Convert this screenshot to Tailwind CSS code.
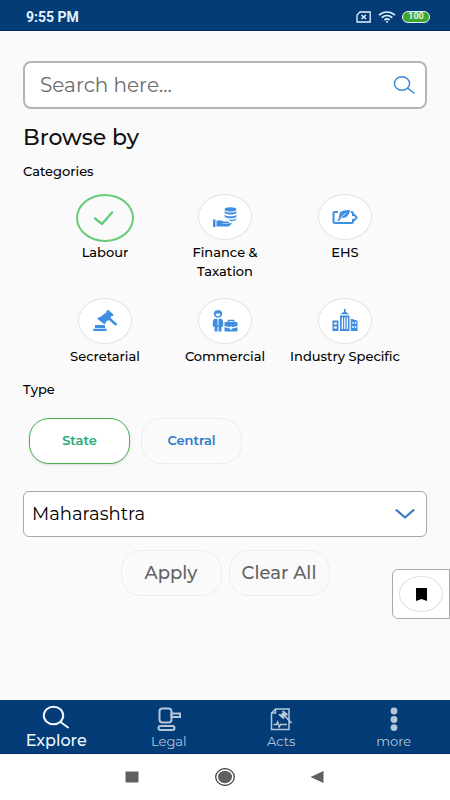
<!DOCTYPE html>
<html lang="en">
<head>
<meta charset="utf-8">
<meta name="viewport" content="width=device-width, initial-scale=1">
<title>Explore</title>
<script src="https://cdn.jsdelivr.net/npm/@tailwindcss/browser@4"></script>
</head>
<body class="flex min-h-screen flex-col bg-[#fafafa] font-['Montserrat','Inter',sans-serif] text-black">

<header class="flex h-[31px] items-center justify-between border-b border-[#002a5c] bg-[#043c78] pr-5 pl-[26px] pt-[3px] text-white">
  <span class="font-['Roboto',sans-serif] text-sm font-bold text-[#e2f3fb]">9:55 PM</span>
  <div class="flex items-center gap-1.5">
    <svg class="h-3 w-4" viewBox="0 0 16 12" fill="none" stroke="#e2f3fb" stroke-width="1.3"><path d="M4 1h10.2v10H1V4z"/><path d="M5.500 4l4.500 4M10 4L5.500 8" stroke-width="1.500"/></svg>
    <svg class="h-3 w-[18px]" viewBox="0 0 18 12" fill="none" stroke="#e2f3fb" stroke-width="1.700"><path d="M1 4.200c4.800-4.300 11.200-4.300 16 0M3.700 6.700c3.200-2.900 7.400-2.900 10.600 0M6.400 9c1.600-1.400 3.600-1.400 5.200 0"/><circle cx="9" cy="10.700" r="1" fill="#e2f3fb" stroke="none"/></svg>
    <span class="flex h-3 w-7 items-center justify-center rounded-full border border-[#e2f3fb] bg-[#43a62c] font-['Roboto',sans-serif] text-[9px] font-bold text-[#e2f3fb]">100</span>
  </div>
</header>

<main class="relative flex-1 px-[23px] pt-[30px]">
  <form class="flex h-12 items-center rounded-lg border-2 border-[#b5b5b5] bg-white pr-2.5 pl-[15px]">
    <input type="search" aria-label="Search" placeholder="Search here..." class="min-w-0 flex-1 bg-transparent text-xl leading-6 outline-none placeholder:text-[#6c6c6c]">
    <button type="button" aria-label="Submit search">
      <svg class="h-5 w-[22px]" viewBox="0 0 22 20" fill="none" stroke="#3d86d3" stroke-width="1.500" stroke-linecap="round"><ellipse cx="9" cy="8.500" rx="7.600" ry="6.800"/><path d="M14.800 13.300L21 18"/></svg>
    </button>
  </form>

  <h1 class="mt-[15px] text-[22px] leading-7 font-medium text-[#111]">Browse by</h1>
  <h2 class="mt-[9px] text-[13px] leading-5 font-medium">Categories</h2>

  <div class="mt-[13px] grid grid-cols-3 gap-y-[17px] px-[22px] text-center text-[13px] leading-[19px] font-medium">
    <button type="button" aria-pressed="true" class="flex flex-col items-center">
      <span class="mb-px flex h-12 w-[58px] items-center justify-center rounded-[50%] border-2 border-[#67cb78]">
        <svg class="h-4 w-6" viewBox="2 0 24 16" fill="none" stroke="#67cb78" stroke-width="2.400" stroke-linecap="round" stroke-linejoin="round"><path d="M4 8.500L11 14 21 2.500"/></svg>
      </span>
      <span>Labour</span>
    </button>
    <button type="button" class="flex flex-col items-center">
      <span class="mb-[3px] flex h-[46px] w-[54px] items-center justify-center rounded-[50%] border border-[#e3e3e3] bg-white">
        <svg class="h-5 w-6" viewBox="0 0 24 20" fill="#3f8ee2"><path d="M0 12.500h2.500V20H0zM3.500 13.500h5.300l1.700 1H15c1.500 0 1.500 2 0 2H9.500v.6H15l2-1.100c1.200-.5 2 .4 1.200 1.300L15.800 19.500H3.500z"/><ellipse cx="17.500" cy="2.400" rx="6" ry="2.200"/><path d="M11.500 4c2 2 10 2 12 0v1.700c-1 2.400-11 2.400-12 0zM11.500 7.700c2 2 10 2 12 0v1.700c-1 2.400-11 2.400-12 0zM11.500 11.300c2 2 10 2 12 0V12c-.8 1.600-3 2.200-5.500 2.200l-2.500-1.300c-2 0-3.600-.4-4-1.300z"/></svg>
      </span>
      <span class="w-20">Finance &amp; Taxation</span>
    </button>
    <button type="button" class="flex flex-col items-center">
      <span class="mb-[3px] flex h-[46px] w-[54px] items-center justify-center rounded-[50%] border border-[#e3e3e3] bg-white">
        <svg class="h-4 w-[26px]" viewBox="0 0 26 16" fill="none" stroke="#3f8ee2" stroke-width="2"><path d="M6 3H3Q1.500 3 1.500 4.500v8Q1.500 14 3 14h16.500q1.500 0 1.500-1.500V11h1.500l2-2.500-2-2.500H21V4.500Q21 3 19.500 3h-.8"/><path d="M18 .8C13 1.800 7.500.8 7.200 6.400L6.500 10.600l2-1.800c4.500 1 8.800-1.300 9.500-8z" fill="#3f8ee2" stroke="none"/><path d="M8 9.500l6-5.500" stroke="#fff" stroke-width=".8"/><path d="M5.800 12l2.700-3" stroke-width="1.500"/></svg>
      </span>
      <span>EHS</span>
    </button>
    <button type="button" class="flex flex-col items-center">
      <span class="mb-[3px] flex h-[46px] w-[54px] items-center justify-center rounded-[50%] border border-[#e3e3e3] bg-white">
        <svg class="h-[22px] w-6" viewBox="0 0 24 22" fill="#3f8ee2"><path d="M13.800.6l1.500-.5 5.200 4.300-.5 1.600-1.500.1-.9 1.900 6.200 5.600c.8 1-.5 2.400-1.800 1.700l-6.200-5.300-2.800 1.800-.3 1.700-1.600.4L4.500 9l.6-1.500 1.800-.2L13.200 2.400z"/><path d="M2 15h10v3H2z"/><path d="M.3 18.700h13.200v2.300H.3z"/></svg>
      </span>
      <span>Secretarial</span>
    </button>
    <button type="button" class="flex flex-col items-center">
      <span class="mb-[3px] flex h-[46px] w-[54px] items-center justify-center rounded-[50%] border border-[#e3e3e3] bg-white">
        <svg class="h-[22px] w-[26px]" viewBox="0 0 26 22" fill="#3f8ee2"><path fill-rule="evenodd" d="M6 .3c3.400 0 4.600 2 4 4.500C9.300 7 7.800 7.800 6 7.800S2.700 7 2 4.800C1.400 2.300 2.600.3 6 .3zM3.500 3.800C4 5.800 5 6.400 6 6.400s2-.6 2.500-2.600C6.800 4 5.500 3 5.500 3s-.9.900-2 .8z"/><path d="M4.300 8.500L6 10l1.700-1.500c3 .3 3.500 2 3.500 4.300v4H9.500V21.500h-3V17h-1v4.500h-3v-4.700H.8v-4c0-2.300.5-4 3.500-4.300z"/><path d="M6 10v5.500" stroke="#fff" stroke-width=".9"/><path d="M12.500 13q0-1 1-1h11q1 0 1 1v3l-5.500 1.300v-.8h-2v.8L12.500 16zM12.500 17.200l5.500 1.200v1h2v-1l5.500-1.200v3.300q0 1-1 1h-11q-1 0-1-1z"/><path d="M16.300 12v-1.500h5.400V12" fill="none" stroke="#3f8ee2" stroke-width="1.300"/></svg>
      </span>
      <span>Commercial</span>
    </button>
    <button type="button" class="flex flex-col items-center">
      <span class="mb-[3px] flex h-[46px] w-[54px] items-center justify-center rounded-[50%] border border-[#e3e3e3] bg-white">
        <svg class="mb-0.5 h-[22px] w-[26px]" viewBox="0 0 26 22" fill="#3f8ee2"><path d="M12 0h1.600v2.200c.5 1 1.900 1.700 3.700 3H8.300c1.900-1.300 3.200-2 3.700-3z"/><path fill-rule="evenodd" d="M8 6.500h9.500V22H8zM9.700 8.500V20h1.300V8.500zm2.500 0V20h1.200V8.500zm2.500 0V20h1.200V8.500zM.5 11.500h6V22h-6zM2 13.500v2h2.800v-2zm0 4v2h2.800v-2zM18.800 9.500l6.700 2.200V22h-6.700zm1.500 3.500v1.800h1.400V13zm2.600 0v1.800h1.300V13zm-2.600 4v2h1.400v-2zm2.600 0v2h1.300v-2z"/></svg>
      </span>
      <span class="whitespace-nowrap">Industry Specific</span>
    </button>
  </div>

  <h2 class="mt-[13px] text-[13px] leading-5 font-medium">Type</h2>
  <div class="mt-[19px] flex gap-[11px] px-1.5 text-[13px] font-semibold">
    <button type="button" aria-pressed="true" class="h-[46px] w-[101px] rounded-[20px] border border-[#4caf50] bg-white text-[#26a974] shadow-sm">State</button>
    <button type="button" class="h-[46px] w-[101px] rounded-[20px] border border-[#ececec] text-[#2f78c8]">Central</button>
  </div>

  <div class="relative mt-[27px]">
    <select aria-label="State" class="block h-[46px] w-full appearance-none rounded-md border border-[#a9a9a9] bg-white pr-10 pl-2 text-lg outline-none"><option>Maharashtra</option></select>
    <svg class="pointer-events-none absolute top-[18px] right-3 h-2.5 w-5" viewBox="0 0 20 10" fill="none" stroke="#3d7cc4" stroke-width="2.200" stroke-linecap="round" stroke-linejoin="round"><path d="M1.500 1.200L10 8.500l8.500-7.300"/></svg>
  </div>

  <div class="mt-[13px] mb-6 flex justify-center gap-[7px] text-lg font-medium text-[#636363]">
    <button type="button" class="h-[46px] w-[101px] rounded-[20px] border border-[#ececec]">Apply</button>
    <button type="button" class="h-[46px] w-[101px] rounded-[20px] border border-[#ececec]">Clear All</button>
  </div>

  <button type="button" aria-label="Bookmarks" class="absolute top-[538px] right-0 flex h-[50px] w-[58px] items-center justify-center rounded-l-md border border-[#a9a9a9] bg-white">
    <span class="flex h-9 w-11 items-center justify-center rounded-[50%] border border-[#e0e0e0]">
      <svg class="h-[13px] w-[11px]" viewBox="0 0 11 13"><path d="M0 0h11v13L5.500 11 0 13z"/></svg>
    </span>
  </button>
</main>

<nav class="grid h-[54px] grid-cols-4 border-b border-[#002a5c] bg-[#043c78] text-[13px] leading-[18px] text-[#b4c6da]">
  <a href="#explore" aria-current="page" class="flex flex-col items-center pt-[5px] text-base leading-[18px] font-medium text-[#eef7fd]">
    <svg class="mb-[3px] h-6 w-7" viewBox="0 0 28 24" fill="none" stroke="currentColor" stroke-width="2" stroke-linecap="round"><ellipse cx="11.500" cy="10.500" rx="9.700" ry="8.700"/><path d="M18.500 17l7.500 5.500"/></svg>
    Explore
  </a>
  <a href="#legal" class="flex flex-col items-center pt-[7px]">
    <svg class="mb-px h-6 w-6" viewBox="0 0 24 24" fill="none" stroke="currentColor" stroke-width="2"><rect x="2.500" y="1.500" width="12" height="14" rx="3"/><path d="M14.500 6.500H23v3.500h-8.500z"/><rect x="1.500" y="19" width="16" height="4" rx="2"/></svg>
    Legal
  </a>
  <a href="#acts" class="flex flex-col items-center pt-[7px]">
    <svg class="mb-px h-6 w-6" viewBox="0 0 24 24" fill="none" stroke="currentColor" stroke-width="1.500"><path d="M6.500 2H20v20.500H2.500V6zM6.500 2v4h-4M4.500 17.500h3l1.200-2.500 1.500 5 1.300-2.500H18"/><path d="M15 8l7.500 8" stroke-width="1.700"/><path d="M14.800 4.300l3.400 2.900-3.700 3.800-3.300-3z" fill="currentColor" stroke="none"/><path d="M13.500 4l5 4M10 7.300l5 4.200" stroke-width="1.700"/></svg>
    Acts
  </a>
  <a href="#more" class="flex flex-col items-center pt-[7px]">
    <svg class="mb-px h-6 w-2" viewBox="0 0 8 24" fill="currentColor"><circle cx="4" cy="4" r="3.400"/><circle cx="4" cy="12.500" r="3.400"/><circle cx="4" cy="20.600" r="3.400"/></svg>
    more
  </a>
</nav>

<footer class="flex h-[46px] items-center justify-center gap-[73px] bg-white">
  <button type="button" aria-label="Recent apps"><svg class="h-5 w-5" viewBox="0 0 20 20"><path d="M3.500 4.500h13v11h-13z" fill="#606060"/></svg></button>
  <button type="button" aria-label="Home"><svg class="h-5 w-5" viewBox="0 0 20 20"><ellipse cx="10" cy="10" rx="9.300" ry="8.300" fill="none" stroke="#333" stroke-width="1.200"/><ellipse cx="10" cy="10" rx="7" ry="6.200" fill="#606060"/></svg></button>
  <button type="button" aria-label="Back"><svg class="h-5 w-5" viewBox="0 0 20 20"><path d="M2.500 10L15.500 4v12z" fill="#606060"/></svg></button>
</footer>
</body>
</html>
